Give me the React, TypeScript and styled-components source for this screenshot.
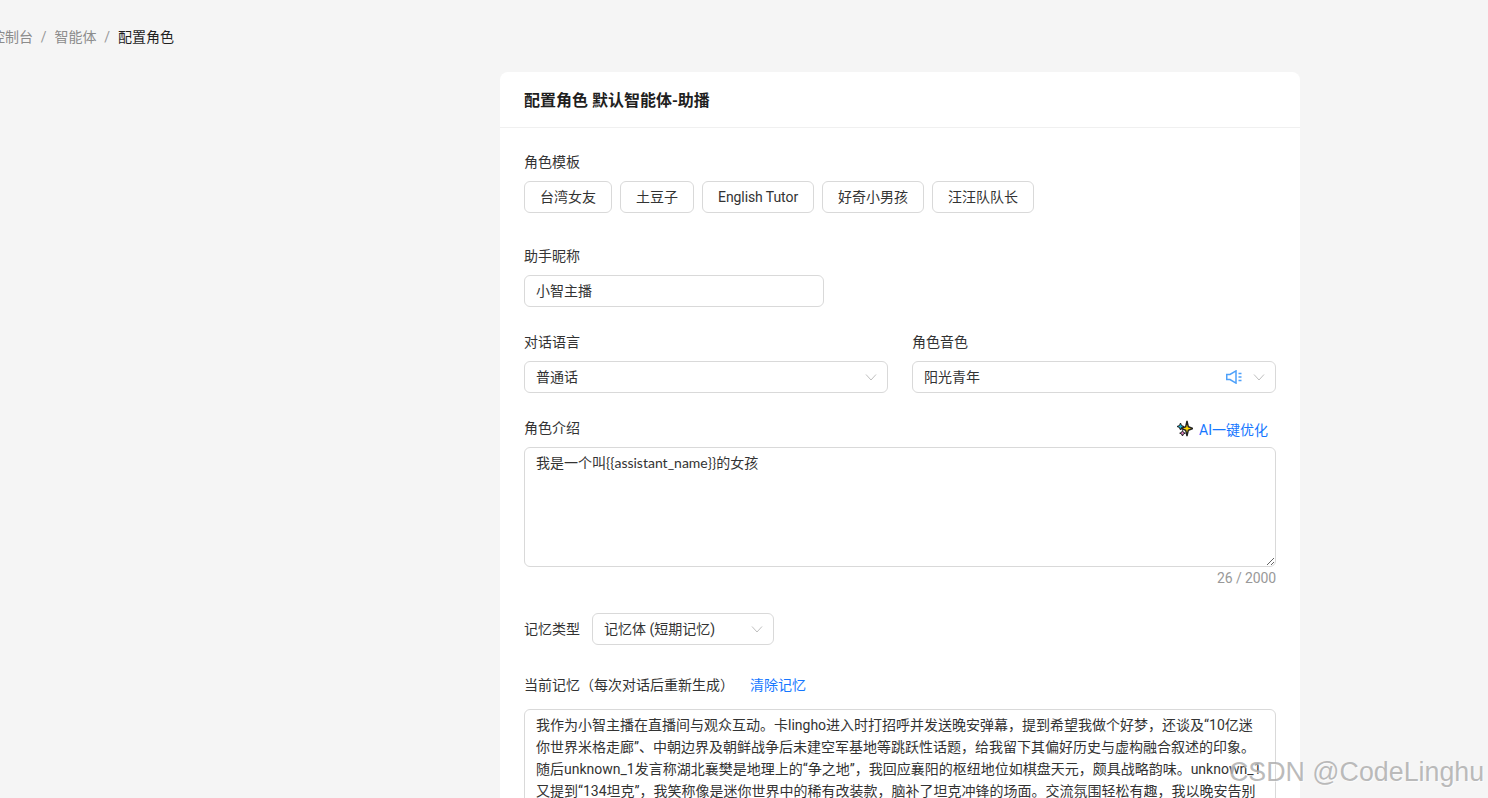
import React from "react";
import styled, { createGlobalStyle } from "styled-components";

const Global = createGlobalStyle`
  html, body { margin: 0; padding: 0; height: 798px; overflow: hidden; background: #f5f5f5; }
  body { font-family: Roboto, "Noto Sans CJK SC", sans-serif; font-size: 14px; color: #333; }
  * { box-sizing: border-box; }
`;

const Page = styled.div`
  position: relative;
  width: 1488px;
  height: 798px;
  overflow: hidden;
  background: #f5f5f5;
`;

const Breadcrumb = styled.nav`
  display: flex;
  align-items: center;
  height: 20px;
  margin: 27px 0 0 -9px;
  font-size: 14px;
  line-height: 20px;
`;

const Crumb = styled.span<{ $current?: boolean }>`
  color: ${(p) => (p.$current ? "#1f1f1f" : "#8c8c8c")};
`;

const Sep = styled.span`
  width: 21.5px;
  text-align: center;
  color: #999;
`;

const Card = styled.section`
  width: 800px;
  margin: 25px 0 0 500px;
  background: #fff;
  border-radius: 8px 8px 0 0;
`;

const CardHeader = styled.header`
  height: 56px;
  padding: 0 24px 2px;
  display: flex;
  align-items: center;
  border-bottom: 1px solid #f0f0f0;
  font-size: 16px;
  font-weight: 600;
  color: #1f1f1f;
`;

const CardBody = styled.div`
  padding: 24px 24px 0;
  display: flex;
  flex-direction: column;
`;

const Label = styled.div`
  font-size: 14px;
  height: 20px;
  line-height: 20px;
  color: #333;
`;

const Templates = styled.div`
  display: flex;
  gap: 8px;
  margin-top: 9px;
`;

const TemplateButton = styled.button<{ $latin?: boolean }>`
  height: 32px;
  padding: 0 15px ${(p) => (p.$latin ? 0 : 2)}px;
  border: 1px solid #d9d9d9;
  border-radius: 6px;
  background: #fff;
  font: inherit;
  font-size: 14px;
  letter-spacing: ${(p) => (p.$latin ? "-0.08px" : "normal")};
  color: #333;
`;

const Field = styled.div<{ $top: number }>`
  margin-top: ${(p) => p.$top}px;
  display: flex;
  flex-direction: column;
  gap: 8px;

  ${Label} {
    line-height: 18px;
  }
`;

const Input = styled.div<{ $width?: number }>`
  width: ${(p) => (p.$width ? `${p.$width}px` : "100%")};
  height: 32px;
  padding: 0 10px 2px 11px;
  display: flex;
  align-items: center;
  gap: 8px;
  border: 1px solid #d9d9d9;
  border-radius: 6px;
  background: #fff;
  font-size: 14px;
  color: #333;
`;

const Grow = styled.span`
  flex: 1;
`;

const Row = styled.div`
  margin-top: 26px;
  display: grid;
  grid-template-columns: 1fr 1fr;
  gap: 24px;
`;

const Chevron = styled.svg`
  width: 12px;
  height: 12px;
  margin-top: 2px;
  fill: none;
  stroke: #bfbfbf;
  stroke-width: 1;
  flex: none;
`;

const Speaker = styled.svg`
  width: 16px;
  height: 14px;
  margin: 2px 3px 0 0;
  fill: none;
  stroke: #4ea1fa;
  stroke-width: 1.5;
  flex: none;
`;

const LabelRow = styled.div`
  display: flex;
  justify-content: space-between;
  align-items: center;
  height: 20px;
`;

const LinkButton = styled.a`
  display: flex;
  align-items: center;
  gap: 6px;
  padding-right: 8px;
  padding-bottom: 1px;
  color: #1677ff;
  font-size: 14px;
`;

const TextArea = styled.textarea<{ $height: number }>`
  display: block;
  width: 100%;
  height: ${(p) => p.$height}px;
  padding: 4px 11px;
  border: 1px solid #d9d9d9;
  border-radius: 6px;
  background: #fff;
  font-family: Lato, "Noto Sans CJK SC", sans-serif;
  font-size: 14px;
  line-height: 22px;
  color: #333;
  outline: none;
`;

const Counter = styled.div`
  margin-top: 1px;
  text-align: right;
  line-height: 20px;
  letter-spacing: -0.1px;
  color: #999;
  font-size: 14px;
`;

const InlineRow = styled.div`
  margin-top: 25px;
  display: flex;
  align-items: center;
  gap: 12px;
`;

const MemoryHead = styled.div`
  margin-top: 30px;
  display: flex;
  align-items: center;
  gap: 16px;
  height: 20px;
`;

const ClearLink = styled.a`
  padding-bottom: 2px;
  color: #1677ff;
`;

const Memory = styled.div`
  margin-top: 14px;
  padding: 4px 11px;
  border: 1px solid #d9d9d9;
  border-radius: 6px;
  background: #fff;
  line-height: 22px;
  height: 140px;
  color: #333;
`;

const Watermark = styled.div`
  position: absolute;
  left: 1229px;
  top: 752px;
  font-family: "Liberation Sans", sans-serif;
  font-size: 26.8px;
  line-height: 40px;
  white-space: nowrap;
  color: rgba(165, 165, 165, 0.75);
  text-shadow: 1px 1px 1px rgba(255, 255, 255, 0.6);
  pointer-events: none;
`;

const ChevronIcon = () => (
  <Chevron viewBox="0 0 12 12">
    <path d="M1 3.5 6 9l5-5.5" />
  </Chevron>
);

const templates = ["台湾女友", "土豆子", "English Tutor", "好奇小男孩", "汪汪队队长"];

export default function App() {
  return (
    <Page>
      <Global />
      <Breadcrumb>
        <Crumb>控制台</Crumb>
        <Sep>/</Sep>
        <Crumb>智能体</Crumb>
        <Sep>/</Sep>
        <Crumb $current>配置角色</Crumb>
      </Breadcrumb>
      <Card>
        <CardHeader>配置角色 默认智能体-助播</CardHeader>
        <CardBody>
          <Label>角色模板</Label>
          <Templates>
            {templates.map((t) => (
              <TemplateButton key={t} $latin={/^[A-Za-z]/.test(t)}>{t}</TemplateButton>
            ))}
          </Templates>
          <Field $top={34}>
            <Label>助手昵称</Label>
            <Input $width={300}>小智主播</Input>
          </Field>
          <Row>
            <Field $top={0}>
              <Label>对话语言</Label>
              <Input>
                <Grow>普通话</Grow>
                <ChevronIcon />
              </Input>
            </Field>
            <Field $top={0}>
              <Label>角色音色</Label>
              <Input>
                <Grow>阳光青年</Grow>
                <Speaker viewBox="0 0 16 14">
                  <path d="M.75 4.5H4L10 .9v12.200L4 9.500H.75z" />
                  <path d="M12.500 3.500h3M12.500 7h3M12.500 10.500h3" />
                </Speaker>
                <ChevronIcon />
              </Input>
            </Field>
          </Row>
          <Field $top={26}>
            <LabelRow>
              <Label>角色介绍</Label>
              <LinkButton>
                <svg width="16" height="17" viewBox="0 0 16 17">
                  <path d="M10 1 11.300 6.700 16 8.500l-4.700 1.800L10 16 8.700 10.300 4 8.500l4.700-1.800z" fill="#ffd900" stroke="#222" strokeWidth="1.400" />
                  <path d="M3.500 3 4.500 5.500l2.500 1L4.500 7.500 3.500 10 2.500 7.500 0 6.500l2.500-1z" fill="#19b5d8" stroke="#222" strokeWidth="1" />
                  <path d="M5.500 10.500l.9 1.900 1.900.8-1.900.8-.9 2-.9-2-1.900-.8 1.900-.8z" fill="#e27bc0" stroke="#222" strokeWidth="1" />
                </svg>
                AI一键优化
              </LinkButton>
            </LabelRow>
            <div>
              <TextArea $height={120} readOnly value="我是一个叫{{assistant_name}}的女孩" />
              <Counter>26 / 2000</Counter>
            </div>
          </Field>
          <InlineRow>
            <Label>记忆类型</Label>
            <Input $width={182}>
              <Grow>记忆体 (短期记忆)</Grow>
              <ChevronIcon />
            </Input>
          </InlineRow>
          <MemoryHead>
            <Label>当前记忆（每次对话后重新生成）</Label>
            <ClearLink>清除记忆</ClearLink>
          </MemoryHead>
          <Memory>
            我作为小智主播在直播间与观众互动。卡lingho进入时打招呼并发送晚安弹幕，提到希望我做个好梦，还谈及“10亿迷你世界米格走廊”、中朝边界及朝鲜战争后未建空军基地等跳跃性话题，给我留下其偏好历史与虚构融合叙述的印象。随后unknown_1发言称湖北襄樊是地理上的“争之地”，我回应襄阳的枢纽地位如棋盘天元，颇具战略韵味。unknown_1又提到“134坦克”，我笑称像是迷你世界中的稀有改装款，脑补了坦克冲锋的场面。交流氛围轻松有趣，我以晚安告别
          </Memory>
        </CardBody>
      </Card>
      <Watermark>CSDN @CodeLinghu</Watermark>
    </Page>
  );
}
